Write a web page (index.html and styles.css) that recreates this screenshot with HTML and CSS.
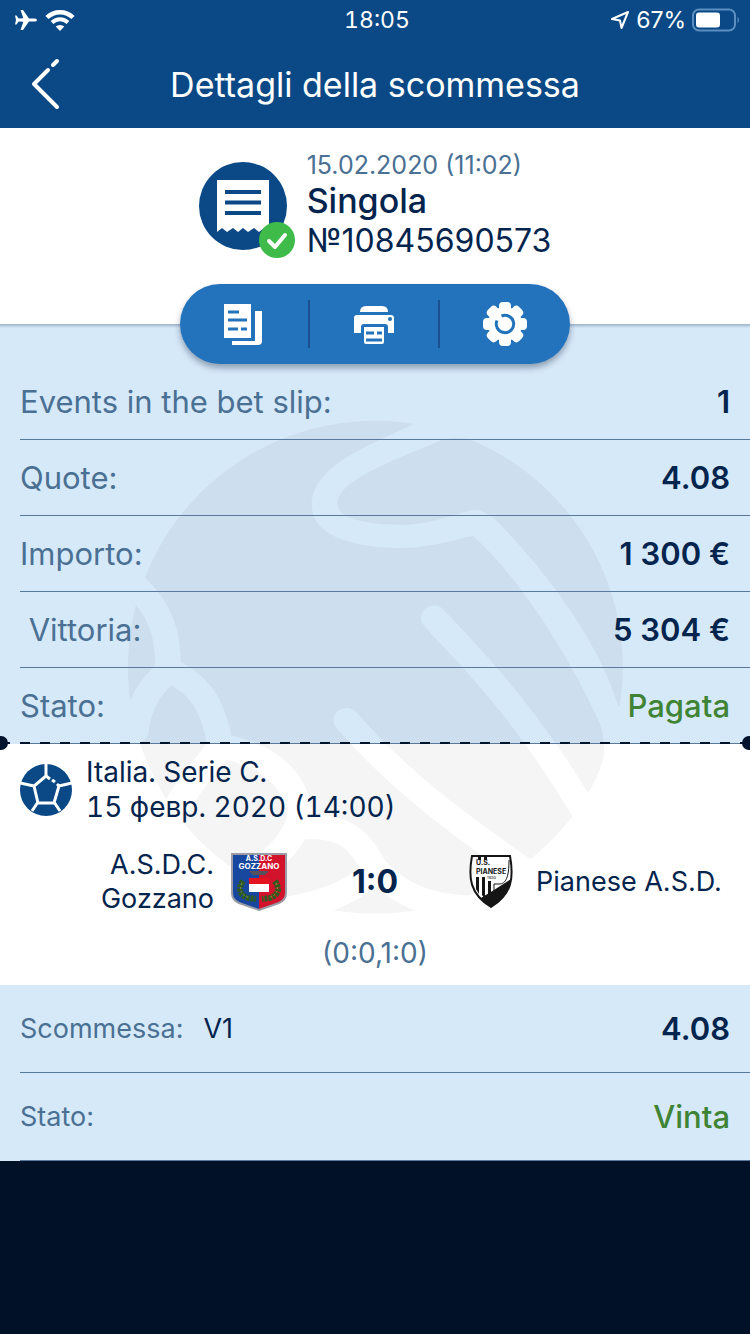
FILE: index.html
```
<!DOCTYPE html>
<html lang="it">
<head>
    <meta charset="UTF-8">
    <meta name="viewport" content="width=device-width, initial-scale=1">
    <title>Dettagli della scommessa</title>
    <link rel="stylesheet" href="styles.css">
</head>
<body>
    <header class="top">
        <div class="status-bar">
            <div class="status-left">
                <svg width="24" height="24" viewBox="0 0 24 24" fill="#fff">
                    <path d="M23 12c0-1-1.500-1.600-3-1.600h-5L9 2H6.500l2.800 8.300-4.600.3L2.500 7.500H1l1 4.500-1 4.500h1.500l2.200-3.100 4.600.3L6.500 22H9l6-8.400h5c1.500 0 3-.6 3-1.600z"/>
                </svg>
                <svg width="32" height="24" viewBox="0 0 32 24" fill="none" stroke="#fff">
                    <path d="M3 9.500a18.500 18.500 0 0 1 26 0" stroke-width="4.500"/>
                    <path d="M8 14.500a11.500 11.500 0 0 1 16 0" stroke-width="4"/>
                    <path d="M16 23l-4.300-4.400a6.300 6.300 0 0 1 8.600 0z" fill="#fff" stroke="none"/>
                </svg>
            </div>
            <span class="clock">18:05</span>
            <div class="status-right">
                <svg width="20" height="20" viewBox="0 0 20 20" fill="none" stroke="#fff" stroke-width="2" stroke-linejoin="round">
                    <path d="M18 2L2 9l8 1.500L11.500 18z"/>
                </svg>
                <span class="percent">67%</span>
                <svg width="48" height="24" viewBox="0 0 48 24">
                    <rect x="1" y="1.500" width="42" height="21" rx="6" fill="none" stroke="#5a8fc0" stroke-width="2"/>
                    <rect x="4" y="4.500" width="24" height="15" rx="3" fill="#fff"/>
                    <path d="M45.500 8.500q3 3.500 0 7z" fill="#5a8fc0"/>
                </svg>
            </div>
        </div>
        <div class="nav-bar">
            <button class="back" aria-label="Indietro">
                <svg width="32" height="56" viewBox="0 0 32 56" fill="none" stroke="#fff" stroke-width="4" stroke-linecap="round" stroke-linejoin="round">
                    <path d="M27 5l-4 4M18 14L4 28l23 23"/>
                </svg>
            </button>
            <h1>Dettagli della scommessa</h1>
        </div>
    </header>

    <section class="bet-head">
        <svg class="ticket" width="96" height="96" viewBox="0 0 96 96">
            <circle cx="44" cy="44" r="44" fill="#0a4986"/>
            <path d="M18 18h52v52l-5-4-5 4-5-4-6 4-5-4-5 4-5-4-6 4-5-4-5 4z" fill="#fff"/>
            <path d="M26 30h36M26 40.500h36M26 51h36" stroke="#0a4986" stroke-width="4"/>
            <circle cx="78" cy="78" r="18" fill="#3fbb49"/>
            <path d="M70 79l6 6 10-12" fill="none" stroke="#fff" stroke-width="4" stroke-linecap="round" stroke-linejoin="round"/>
        </svg>
        <div class="bet-info">
            <div class="bet-date">15.02.2020 (11:02)</div>
            <div class="bet-type">Singola</div>
            <div class="bet-number">№10845690573</div>
        </div>
    </section>

    <main class="slip">
        <!-- pallone sullo sfondo -->
        <svg class="ball-bg" width="560" height="540" viewBox="0 0 1568 1568" preserveAspectRatio="none">
            <mask id="seams">
                <rect width="1568" height="1568" fill="#fff"/>
                <path fill="#000" d="M878 70C760 130 593 190 593 305C593 400 720 430 850 430C940 428 1000 400 1045 395C1200 540 1340 800 1400 940Q1415 985 1410 1040L1390 1100L1568 1118V780L1452 890C1400 720 1280 530 1105 345Q1070 315 1040 320C960 345 900 362 850 362C760 362 665 350 665 300C665 230 850 165 960 115Q1010 100 1065 125L1100 0H878z"/>
                <g fill="none" stroke="#000" stroke-width="72" stroke-linecap="round">
                    <path d="M690 930C830 1095 960 1200 1180 1360"/>
                    <path d="M935 633C1080 790 1220 950 1370 1220"/>
                    <path d="M100 540C170 610 192 680 190 775"/>
                    <path d="M190 790C140 830 110 880 100 960"/>
                    <path d="M195 785C290 830 320 900 338 1010"/>
                    <path d="M338 1005C300 1060 260 1100 215 1180"/>
                    <path d="M338 1005C480 1030 560 1110 560 1230"/>
                    <path d="M560 1220C530 1300 480 1340 410 1390"/>
                    <path d="M560 1240C700 1230 730 1290 770 1360"/>
                    <path d="M770 1370C700 1430 640 1455 520 1480"/>
                    <path d="M770 1360C850 1450 950 1485 1130 1475"/>
                </g>
            </mask>
            <ellipse cx="771" cy="776" rx="693" ry="716" fill="#000" fill-opacity="0.04" mask="url(#seams)"/>
        </svg>

        <section class="summary">
            <div class="actions">
                <button aria-label="Copia">
                    <svg width="44" height="44" viewBox="0 0 44 44">
                        <path fill="#fff" d="M2 2h27v34H2z"/>
                        <path fill="#fff" d="M33 9h7v30q0 4-4 4H10v-4h23z"/>
                        <path d="M6 10h11M6 18h19M6 27h10M19 27h6" stroke="#2273bc" stroke-width="3"/>
                    </svg>
                </button>
                <button aria-label="Stampa">
                    <svg width="44" height="44" viewBox="0 0 44 44">
                        <path fill="#fff" d="M8 10q0-6 6-6h16q6 0 6 6z"/>
                        <path fill="#fff" d="M2 16q0-3 3-3h34q3 0 3 3v15h-6v-6q0-3-3-3H12q-3 0-3 3v6H2z"/>
                        <circle cx="38" cy="17" r="2" fill="#2273bc"/>
                        <path fill="#fff" d="M12 25h20v15q0 2-2 2H14q-2 0-2-2z"/>
                        <path d="M14 31h8M25 31h5M14 38h16" stroke="#2273bc" stroke-width="3"/>
                    </svg>
                </button>
                <button aria-label="Impostazioni">
                    <svg width="44" height="44" viewBox="0 0 44 44">
                        <g fill="#fff">
                            <circle cx="22" cy="22" r="17"/>
                            <rect x="16" y="0" width="12" height="44" rx="4"/>
                            <rect x="0" y="16" width="44" height="12" rx="4"/>
                            <rect x="16" y="0" width="12" height="44" rx="4" transform="rotate(45 22 22)"/>
                            <rect x="16" y="0" width="12" height="44" rx="4" transform="rotate(-45 22 22)"/>
                        </g>
                        <path d="M18.500 14a8.700 8.700 0 1 1-4.500 4.500" fill="none" stroke="#2273bc" stroke-width="3"/>
                    </svg>
                </button>
            </div>
            <dl class="rows">
                <div class="row"><dt>Events in the bet slip:</dt><dd>1</dd></div>
                <div class="row"><dt>Quote:</dt><dd>4.08</dd></div>
                <div class="row"><dt>Importo:</dt><dd>1 300 €</dd></div>
                <div class="row"><dt>&nbsp;Vittoria:</dt><dd>5 304 €</dd></div>
                <div class="row"><dt>Stato:</dt><dd class="win">Pagata</dd></div>
            </dl>
            <div class="tear"></div>
        </section>

        <section class="event">
            <div class="league">
                <svg width="52" height="52" viewBox="0 0 52 52">
                    <circle cx="26" cy="26" r="26" fill="#0a4986"/>
                    <g fill="none" stroke="#fff" stroke-width="3">
                        <path d="M30 15l-4-3-12 10 4 17h16l5-17-2-2M26 12V0M14 22L0 19M39 22l13-3M18 38l-6 9M34 38l6 9"/>
                    </g>
                    <path d="M32 16l3 2" stroke="#fff" stroke-width="3"/>
                </svg>
                <div>
                    <div>Italia. Serie C.</div>
                    <div>15 февр. 2020 (14:00)</div>
                </div>
            </div>
            <div class="match">
                <div class="team home">
                    <span>A.S.D.C.<br>Gozzano</span>
                    <svg width="56" height="58" viewBox="0 0 56 58">
                        <path d="M1 1h54v39q0 7-7 10L28 57 8 50q-7-3-7-10z" fill="#17479e"/>
                        <path d="M28 1h27v39q0 7-7 10l-20 7z" fill="#d3122c"/>
                        <path d="M1 1h54v39q0 7-7 10L28 57 8 50q-7-3-7-10z" fill="none" stroke="#9a9da6" stroke-width="2"/>
                        <text x="28" y="8" class="crest-text">A.S.D.C</text>
                        <text x="28" y="16" class="crest-text wide">GOZZANO</text>
                        <path d="M18 18h20l-4 4H22z" fill="#56525c"/>
                        <path d="M12 28q-8 12 5 17l8 1M44 28q8 12-5 17l-8 1" fill="none" stroke="#2f5a20" stroke-width="6" stroke-dasharray="3 1"/>
                        <path d="M11 30q-5 11 8 15M45 30q5 11-8 15" fill="none" stroke="#8a9a2c" stroke-width="1" stroke-dasharray="2 2"/>
                        <path d="M18 25h20v14H18z" fill="#fff"/>
                        <path d="M18 25h20v6H18z" fill="#e3131f"/>
                    </svg>
                </div>
                <strong class="score">1:0</strong>
                <div class="team away">
                    <svg width="56" height="58" viewBox="0 0 56 58">
                        <path d="M9 3h38c4 22 2 38-19 51C7 41 5 25 9 3z" fill="#fff"/>
                        <path d="M15 3h3v4h-3zM21 3h3v4h-3zM13 24h3v17l-3-5zM19 24h3v22l-3-4zM25 28h3v12l-3 2z" fill="#151515"/>
                        <path d="M31 38v-7h5c7 0 10-7 10-24" fill="none" stroke="#151515" stroke-width="1"/>
                        <path d="M48 26C46 38 42 46 28 54 23 51 20 48 18 45l13-8z" fill="#151515"/>
                        <path d="M9 3h38c4 22 2 38-19 51C7 41 5 25 9 3z" fill="none" stroke="#151515" stroke-width="2"/>
                        <text x="13" y="12" class="crest-text dark">U.S.</text>
                        <text x="13" y="21" class="crest-text dark">PIANESE</text>
                        <text x="24" y="26" class="crest-year">1930</text>
                    </svg>
                    <span>Pianese A.S.D.</span>
                </div>
            </div>
            <div class="halves">(0:0,1:0)</div>
        </section>

        <dl class="rows result">
            <div class="row"><dt>Scommessa:</dt><dd class="pick">V1</dd><dd>4.08</dd></div>
            <div class="row"><dt>Stato:</dt><dd class="win">Vinta</dd></div>
        </dl>
    </main>
</body>
</html>
```
FILE: styles.css
```
* {
    box-sizing: border-box;
}

body {
    margin: 0;
    min-height: 100vh;
    background-color: #001128;
    color: #03244d;
    font-family: Inter, "Liberation Sans", sans-serif;
}

svg {
    display: block;
    flex-shrink: 0;
}

button {
    padding: 0;
    border: none;
    background: none;
    cursor: pointer;
}

/* Intestazione */
.top {
    background-color: #0a4986;
    color: #fff;
}

.status-bar {
    display: grid;
    grid-template-columns: 1fr auto 1fr;
    align-items: center;
    height: 40px;
    padding: 0 10px 0 14px;
    font-size: 23px;
}

.clock {
    font-variant-numeric: tabular-nums;
}

.status-left, .status-right {
    display: flex;
    align-items: center;
    gap: 6px;
}

.status-right {
    justify-content: flex-end;
}

.nav-bar {
    display: grid;
    grid-template-columns: 60px 1fr 60px;
    align-items: center;
    height: 88px;
}

.back {
    padding-left: 30px;
}

h1 {
    margin: 0;
    font-size: 34px;
    font-weight: 400;
    text-align: center;
}

/* Dati della scommessa */
.bet-head {
    display: flex;
    justify-content: center;
    align-items: flex-end;
    gap: 12px;
    padding: 20px 20px 62px;
    background-color: #fff;
}

.ticket {
    margin-bottom: 4px;
}

.bet-date {
    font-size: 25px;
    line-height: 34px;
    color: #4a7093;
}

.bet-type {
    font-size: 34px;
    line-height: 38px;
    font-weight: 500;
}

.bet-number {
    font-size: 32px;
    line-height: 42px;
}

.slip {
    position: relative;
}

.ball-bg {
    position: absolute;
    top: 76px;
    left: calc(50% - 275px);
    pointer-events: none;
}

.summary {
    display: flow-root;
    background: linear-gradient(#9fb3c8, #d6e9f9 4px);
}

.actions {
    position: relative;
    display: grid;
    grid-template-columns: repeat(3, 1fr);
    align-items: center;
    width: 390px;
    height: 80px;
    margin: -40px auto 0;
    border-radius: 40px;
    background-color: #2273bc;
    box-shadow: 0 4px 6px rgba(0, 20, 50, 0.35);
}

.actions button {
    display: flex;
    justify-content: center;
    align-items: center;
    height: 48px;
    border-right: 2px solid #1b4f92;
}

.actions button:last-child {
    border-right: none;
}

.rows {
    margin: 0;
    padding-left: 20px;
}

.row {
    position: relative;
    display: flex;
    align-items: center;
    height: 76px;
    padding-right: 20px;
    border-bottom: 1px solid #5a7a9c;
    font-size: 31px;
}

.row dt {
    color: #4a7093;
}

.row dd {
    margin: 0 0 0 auto;
    font-weight: 600;
}

.row .win {
    color: #3f8434;
    font-weight: 500;
}

/* Linea di strappo */
.tear {
    position: relative;
    height: 2px;
    margin-top: -2px;
    background: repeating-linear-gradient(90deg, #00132d 0 10px, transparent 10px 20px);
}

.tear::before, .tear::after {
    content: "";
    position: absolute;
    top: -6px;
    width: 8px;
    height: 14px;
    background-color: #00132d;
}

.tear::before {
    left: 0;
    border-radius: 0 7px 7px 0;
}

.tear::after {
    right: 0;
    border-radius: 7px 0 0 7px;
}

/* Evento */
.event {
    padding: 11px 20px 15px;
    background-color: #fff;
}

.league, .match, .halves {
    position: relative;
}

.league {
    display: flex;
    align-items: center;
    gap: 14px;
    font-size: 28px;
    line-height: 35px;
    font-variant-numeric: tabular-nums;
}

.match {
    display: grid;
    grid-template-columns: 1fr 176px 1fr;
    align-items: center;
    margin-top: 23px;
    font-size: 27px;
    line-height: 34px;
}

.team {
    display: flex;
    align-items: center;
    gap: 17px;
    white-space: nowrap;
}

.home {
    justify-content: flex-end;
    text-align: right;
}

.score {
    font-size: 32px;
    font-weight: 700;
    text-align: center;
}

.crest-text {
    font-size: 7px;
    font-weight: 700;
    text-anchor: middle;
    fill: #fff;
}

.crest-text.wide {
    font-size: 8px;
}

.crest-text.dark {
    fill: #151515;
    text-anchor: start;
}

.crest-year {
    font-size: 4px;
}

.halves {
    margin-top: 20px;
    font-size: 28px;
    line-height: 34px;
    text-align: center;
    color: #4a7093;
}

.result {
    position: relative;
    background-color: #d6e9f9;
}

.result .row {
    height: 88px;
}

.result dt, .result .pick {
    font-size: 27px;
}

.result .pick {
    margin-left: 20px;
    font-weight: 400;
}
```
